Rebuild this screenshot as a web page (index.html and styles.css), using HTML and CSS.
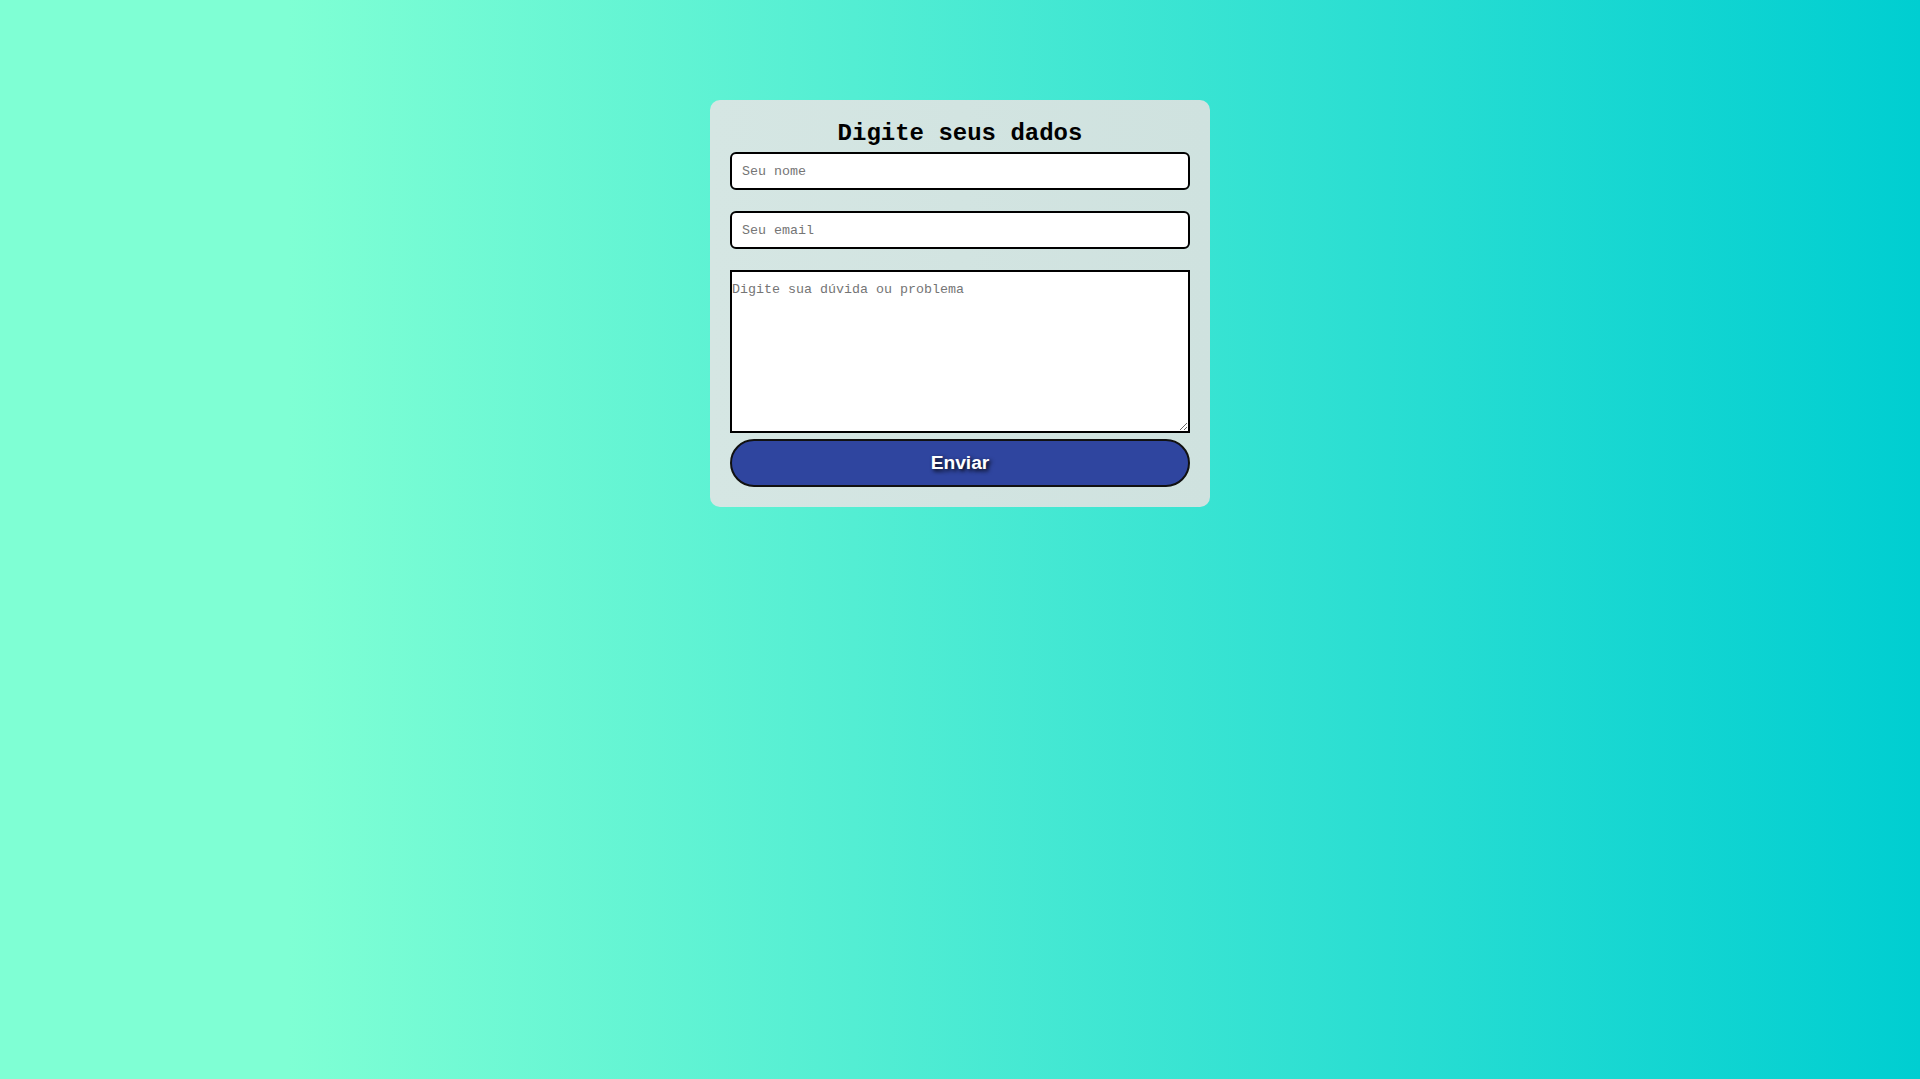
FILE: index.html
```html
<!DOCTYPE html>
<html lang="pt-BR">
<head>
<meta charset="utf-8">
<title>Contato</title>
<link rel="stylesheet" href="styles.css">
</head>
<body>
<main class="page">
  <form class="card">
    <h2 class="title">Digite seus dados</h2>
    <input class="field field-first" type="text" placeholder="Seu nome">
    <input class="field" type="email" placeholder="Seu email">
    <textarea class="message" placeholder="Digite sua dúvida ou problema"></textarea>
    <button class="send" type="button">Enviar</button>
  </form>
</main>
</body>
</html>
```

FILE: styles.css
```css
html, body {
  margin: 0;
  padding: 0;
}

body {
  min-height: 100vh;
  background: linear-gradient(to right, #7fffd4 15%, #00ced1 100%);
  font-family: "Liberation Mono", "Courier New", monospace;
}

.page {
  display: flex;
  justify-content: center;
  padding-top: 100px;
}

.card {
  box-sizing: border-box;
  width: 500px;
  padding: 20px 20px 20px 20px;
  border-radius: 10px;
  background: linear-gradient(to right, #d5e6e3, #cfe2df);
  display: flex;
  flex-direction: column;
}

.title {
  margin: 0;
  font-family: "Liberation Mono", "Courier New", monospace;
  font-size: 24px;
  font-weight: bold;
  line-height: normal;
  text-align: center;
  color: #000;
}

.field {
  box-sizing: border-box;
  height: 38px;
  margin-top: 21px;
  padding: 0 10px;
  border: 2px solid #000;
  border-radius: 6px;
  background: #fff;
  font-family: "Liberation Mono", "Courier New", monospace;
  font-size: 13.333px;
  outline: none;
}

.field-first {
  margin-top: 5px;
}

.field::placeholder,
.message::placeholder {
  color: #757575;
}

.message {
  box-sizing: border-box;
  height: 163px;
  margin-top: 21px;
  padding: 10px 0 0 0;
  border: 2px solid #000;
  border-radius: 0;
  background: #fff;
  font-family: "Liberation Mono", "Courier New", monospace;
  font-size: 13.333px;
  resize: vertical;
  outline: none;
}

.send {
  box-sizing: border-box;
  height: 48px;
  margin-top: 6px;
  border: 2px solid #111;
  border-radius: 24px;
  background: #2f459f;
  color: #fff;
  font-family: "Liberation Sans", Arial, sans-serif;
  font-size: 19.2px;
  font-weight: bold;
  text-shadow: 2px 2px 4px #000;
  cursor: pointer;
}
```
